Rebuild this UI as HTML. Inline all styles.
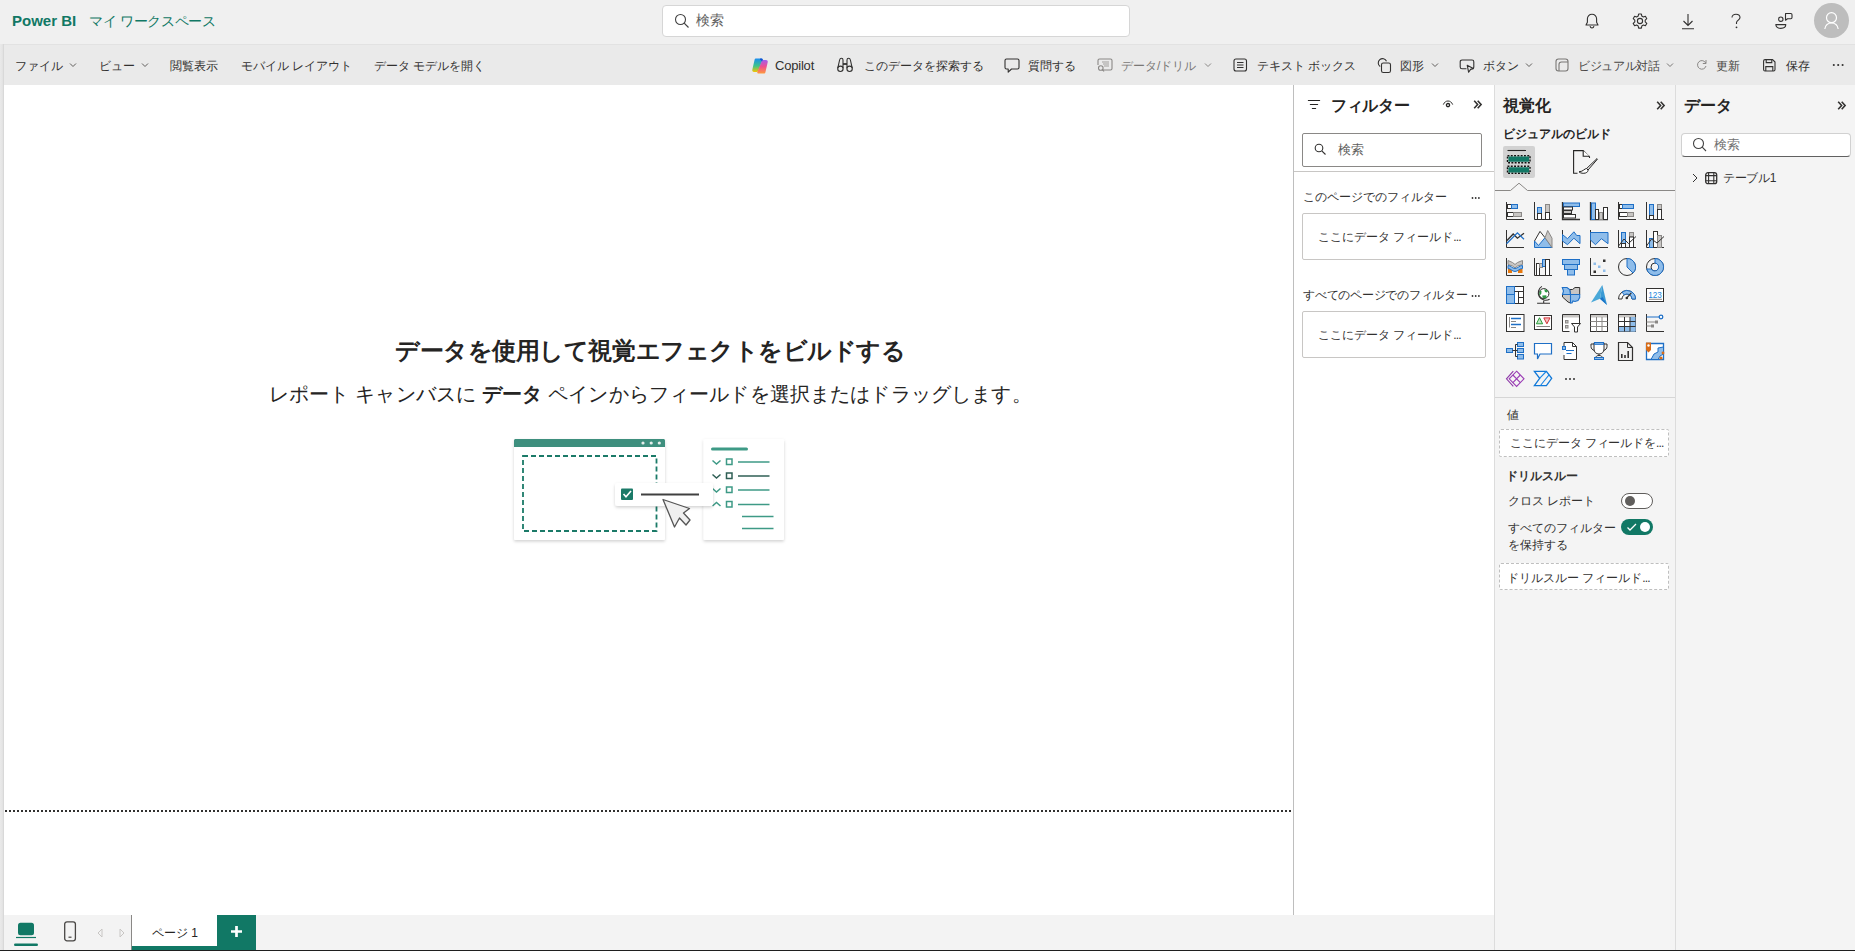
<!DOCTYPE html>
<html><head><meta charset="utf-8">
<style>
*{box-sizing:border-box;margin:0;padding:0}
html,body{width:1855px;height:951px;overflow:hidden;background:#f0f0f0;font-family:"Liberation Sans",sans-serif;color:#252423}
body{position:relative}
.a{position:absolute;white-space:nowrap}
.t12{font-size:12px;line-height:16px}
.t13{font-size:13px;line-height:16px}
.t14{font-size:14px;line-height:18px}
.b{font-weight:bold}
svg{position:absolute;overflow:visible}
.tb{color:#323130}
.dis{color:#605e5c}
</style></head><body>

<!-- ===== top bar ===== -->
<div class="a b" style="left:12px;top:12px;font-size:15px;line-height:18px;color:#117865">Power BI</div>
<div class="a t14" style="left:89px;top:12px;letter-spacing:-0.3px;color:#117865">マイ ワークスペース</div>
<div class="a" style="left:662px;top:5px;width:468px;height:32px;background:#fff;border:1px solid #d6d6d6;border-radius:4px"></div>
<svg style="left:674px;top:13px" width="16" height="16" viewBox="0 0 16 16"><circle cx="6.5" cy="6.5" r="5" fill="none" stroke="#424242" stroke-width="1.1"/><path d="M10.2 10.2L14.5 14.5" stroke="#424242" stroke-width="1.2"/></svg>
<div class="a t14" style="left:696px;top:11px;color:#616161">検索</div>

<!-- bell -->
<svg style="left:1584px;top:13px" width="16" height="16" viewBox="0 0 16 16"><path d="M8 1.2C5.3 1.2 3.4 3.2 3.4 5.8V9.3L2 12H14L12.6 9.3V5.8C12.6 3.2 10.7 1.2 8 1.2Z" fill="none" stroke="#323130" stroke-width="1.1" stroke-linejoin="round"/><path d="M6 13.2C6.3 14.3 7 15 8 15S9.7 14.3 10 13.2" fill="none" stroke="#323130" stroke-width="1.1"/></svg>
<!-- gear -->
<svg style="left:1631px;top:12px" width="18" height="18" viewBox="0 0 18 18"><path d="M7.6 1.2H10.4L10.8 3.3L12.4 4.2L14.4 3.5L15.8 5.9L14.2 7.3V9.1L15.8 10.6L14.4 13L12.4 12.3L10.8 13.2L10.4 15.3H7.6L7.2 13.2L5.6 12.3L3.6 13L2.2 10.6L3.8 9.1V7.3L2.2 5.9L3.6 3.5L5.6 4.2L7.2 3.3Z" transform="translate(0 0.8)" fill="none" stroke="#323130" stroke-width="1.1" stroke-linejoin="round"/><circle cx="9" cy="9" r="2.6" fill="none" stroke="#323130" stroke-width="1.1"/></svg>
<!-- download -->
<svg style="left:1680px;top:13px" width="16" height="17" viewBox="0 0 16 17"><path d="M8 1V12.5M3.5 8L8 12.5L12.5 8M2 15.8H14" fill="none" stroke="#323130" stroke-width="1.1"/></svg>
<!-- help -->
<svg style="left:1729px;top:13px" width="14" height="17" viewBox="0 0 14 17"><path d="M3 4.5C3 2.5 4.7 1.2 7 1.2S11 2.6 11 4.5C11 6.8 8 7.3 7.5 9.5V11" fill="none" stroke="#323130" stroke-width="1.1"/><circle cx="7.5" cy="14.3" r="0.9" fill="#323130"/></svg>
<!-- feedback / people -->
<svg style="left:1774px;top:12px" width="20" height="18" viewBox="0 0 20 18"><circle cx="6.8" cy="7.2" r="2.2" fill="none" stroke="#323130" stroke-width="1.1"/><path d="M1.8 12.6H11.8C11.8 15 9.8 16.4 6.8 16.4S1.8 15 1.8 12.6Z" fill="none" stroke="#323130" stroke-width="1.1" stroke-linejoin="round"/><path d="M11.5 1.5H16.8C17.5 1.5 18 2 18 2.7V5.5C18 6.2 17.5 6.7 16.8 6.7H13.5L11.5 8.2V2.7C11.5 2 11.8 1.5 12.3 1.5Z" fill="none" stroke="#323130" stroke-width="1.1" stroke-linejoin="round"/></svg>
<!-- avatar -->
<div class="a" style="left:1814px;top:3px;width:35px;height:35px;border-radius:50%;background:#bdbdbd"></div>
<svg style="left:1820px;top:9px" width="23" height="23" viewBox="0 0 23 23"><circle cx="11.5" cy="8.7" r="5" fill="none" stroke="#fff" stroke-width="1.2"/><path d="M4.8 20C5.5 16 8 14 11.5 14S17.5 16 18.2 20" fill="none" stroke="#fff" stroke-width="1.2"/></svg>

<!-- ===== left gutter ===== -->
<div class="a" style="left:0;top:44px;width:4px;height:907px;background:linear-gradient(to right,#eaeaea,#e4e4e4 60%,#d4d4d4)"></div>

<!-- ===== toolbar ===== -->
<div class="a" style="left:4px;top:44px;width:1851px;height:41px;background:#eaeaea;border-top:1px solid #e2e2e2"></div>
<div class="a t12 tb" style="left:15px;top:58px">ファイル</div>
<svg style="left:69px;top:62px" width="8" height="6" viewBox="0 0 8 6"><path d="M1 1.5L4 4.5L7 1.5" fill="none" stroke="#605e5c" stroke-width="1"/></svg>
<div class="a t12 tb" style="left:99px;top:58px">ビュー</div>
<svg style="left:141px;top:62px" width="8" height="6" viewBox="0 0 8 6"><path d="M1 1.5L4 4.5L7 1.5" fill="none" stroke="#605e5c" stroke-width="1"/></svg>
<div class="a t12 tb" style="left:170px;top:58px">閲覧表示</div>
<div class="a t12 tb" style="left:241px;top:58px">モバイル レイアウト</div>
<div class="a t12 tb" style="left:374px;top:58px">データ モデルを開く</div>

<!-- copilot -->
<svg style="left:751px;top:57px" width="18" height="18" viewBox="0 0 18 18">
<defs><linearGradient id="cp1" x1="0" y1="0" x2="0" y2="1"><stop offset="0" stop-color="#1a8df0"/><stop offset=".55" stop-color="#3cc48a"/><stop offset="1" stop-color="#f5c400"/></linearGradient>
<linearGradient id="cp2" x1="0" y1="0" x2="0" y2="1"><stop offset="0" stop-color="#a35cf0"/><stop offset=".5" stop-color="#f0508c"/><stop offset="1" stop-color="#ff9a3c"/></linearGradient></defs>
<path d="M4.5 1.5H10.5C11.5 1.5 12 2.3 11.6 3.2L9 9.5L7.4 13.8C7.1 14.5 6.6 15 5.8 15H3C1.7 15 1 14 1.3 12.8L3.3 4C3.6 2.3 4 1.5 4.5 1.5Z" fill="url(#cp1)"/>
<path d="M13.5 16.5H7.5C6.5 16.5 6 15.7 6.4 14.8L9 8.5L10.6 4.2C10.9 3.5 11.4 3 12.2 3H15C16.3 3 17 4 16.7 5.2L14.7 14C14.4 15.7 14 16.5 13.5 16.5Z" fill="url(#cp2)"/>
<path d="M9.2 1.5H10.5C11.5 1.5 12 2.3 11.6 3.2L11 4.6C10.5 3.6 10 3 9 3Z" fill="#1450d0"/>
</svg>
<div class="a t13 tb" style="left:775px;top:58px;letter-spacing:-0.2px">Copilot</div>
<!-- binoculars -->
<svg style="left:836px;top:57px" width="18" height="16" viewBox="0 0 18 16"><path d="M1.8 11.2L3.6 3C3.9 1.7 4.6 1.2 5.4 1.2S7 1.9 7 3V11.2M16.2 11.2L14.4 3C14.1 1.7 13.4 1.2 12.6 1.2S11 1.9 11 3V11.2M7 7H11" fill="none" stroke="#323130" stroke-width="1.1"/><circle cx="4.4" cy="11.8" r="2.7" fill="none" stroke="#323130" stroke-width="1.1"/><circle cx="13.6" cy="11.8" r="2.7" fill="none" stroke="#323130" stroke-width="1.1"/><path d="M7 6.2H11V7.8H7Z" fill="#323130"/></svg>
<div class="a t12 tb" style="left:864px;top:58px">このデータを探索する</div>
<!-- comment -->
<svg style="left:1004px;top:58px" width="16" height="16" viewBox="0 0 16 16"><path d="M2.5 1H13.5C14.3 1 15 1.7 15 2.5V9.5C15 10.3 14.3 11 13.5 11H7.5L4.2 14.2V11H2.5C1.7 11 1 10.3 1 9.5V2.5C1 1.7 1.7 1 2.5 1Z" fill="none" stroke="#323130" stroke-width="1.1" stroke-linejoin="round"/></svg>
<div class="a t12 tb" style="left:1028px;top:58px">質問する</div>
<!-- data/drill (disabled) -->
<svg style="left:1097px;top:58px" width="16" height="16" viewBox="0 0 16 16"><path d="M5 12H13.5C14.3 12 15 11.3 15 10.5V2.5C15 1.7 14.3 1 13.5 1H2.5C1.7 1 1 1.7 1 2.5V7" fill="none" stroke="#8a8886" stroke-width="1.1"/><path d="M5 4H12M6 6H12M7 8H12" stroke="#a19f9d" stroke-width="1"/><circle cx="3.8" cy="10" r="2.3" fill="none" stroke="#8a8886" stroke-width="1.1"/><path d="M5.5 11.7L7 13.5" stroke="#8a8886" stroke-width="1.1"/></svg>
<div class="a t12" style="left:1121px;top:58px;color:#7a7876">データ/ドリル</div>
<svg style="left:1204px;top:62px" width="8" height="6" viewBox="0 0 8 6"><path d="M1 1.5L4 4.5L7 1.5" fill="none" stroke="#8a8886" stroke-width="1"/></svg>
<!-- text box -->
<svg style="left:1233px;top:58px" width="15" height="15" viewBox="0 0 15 15"><rect x="1" y="1" width="12.5" height="12" rx="2" fill="none" stroke="#323130" stroke-width="1.1"/><path d="M4 4.5H10.5M4 7H10.5M4 9.5H10.5" stroke="#323130" stroke-width="1.1"/></svg>
<div class="a t12 tb" style="left:1257px;top:58px">テキスト ボックス</div>
<!-- shapes -->
<svg style="left:1376px;top:57px" width="17" height="17" viewBox="0 0 17 17"><path d="M10.5 4.2A4.3 4.3 0 1 0 4.2 9.5" fill="none" stroke="#323130" stroke-width="1.1"/><rect x="5.5" y="6" width="9" height="9.5" rx="1.8" fill="none" stroke="#323130" stroke-width="1.1"/></svg>
<div class="a t12 tb" style="left:1400px;top:58px">図形</div>
<svg style="left:1431px;top:62px" width="8" height="6" viewBox="0 0 8 6"><path d="M1 1.5L4 4.5L7 1.5" fill="none" stroke="#605e5c" stroke-width="1"/></svg>
<!-- button -->
<svg style="left:1459px;top:58px" width="17" height="16" viewBox="0 0 17 16"><path d="M7.5 10.8H3C1.9 10.8 1.2 10.1 1.2 9V3.8C1.2 2.7 1.9 2 3 2H13C14.1 2 14.8 2.7 14.8 3.8V9C14.8 9.7 14.5 10.2 14 10.5" fill="none" stroke="#323130" stroke-width="1.1"/><path d="M8.2 7.2L14.3 10.6L11.6 11.4L9.6 14.2Z" fill="none" stroke="#323130" stroke-width="1.1" stroke-linejoin="round"/></svg>
<div class="a t12 tb" style="left:1483px;top:58px">ボタン</div>
<svg style="left:1525px;top:62px" width="8" height="6" viewBox="0 0 8 6"><path d="M1 1.5L4 4.5L7 1.5" fill="none" stroke="#605e5c" stroke-width="1"/></svg>
<!-- visual conversation -->
<svg style="left:1555px;top:58px" width="15" height="15" viewBox="0 0 15 15"><rect x="1" y="1" width="12" height="12" rx="2.5" fill="none" stroke="#797775" stroke-width="1.1"/><path d="M4 13V6.5C4 5 5 4 6.5 4H13" fill="none" stroke="#797775" stroke-width="1.1"/></svg>
<div class="a t12" style="left:1578px;top:58px;letter-spacing:-0.35px;color:#484644">ビジュアル対話</div>
<svg style="left:1666px;top:62px" width="8" height="6" viewBox="0 0 8 6"><path d="M1 1.5L4 4.5L7 1.5" fill="none" stroke="#797775" stroke-width="1"/></svg>
<!-- refresh -->
<svg style="left:1696px;top:59px" width="12" height="12" viewBox="0 0 12 12"><path d="M9.8 4.2A4.3 4.3 0 1 0 10 7" fill="none" stroke="#8a8886" stroke-width="1"/><path d="M10 1V4.5H6.8" fill="none" stroke="#8a8886" stroke-width="1"/></svg>
<div class="a t12" style="left:1716px;top:58px;color:#484644">更新</div>
<!-- save -->
<svg style="left:1762px;top:58px" width="15" height="15" viewBox="0 0 15 15"><path d="M1.6 3C1.6 2.2 2.2 1.6 3 1.6H10.6L13 4V11.6C13 12.4 12.4 13 11.6 13H3C2.2 13 1.6 12.4 1.6 11.6Z" fill="none" stroke="#323130" stroke-width="1.1" stroke-linejoin="round"/><path d="M4.2 1.6V4.6H9.8V1.6M3.8 13V8.6H10.8V13" fill="none" stroke="#323130" stroke-width="1.1"/></svg>
<div class="a t12 tb" style="left:1786px;top:58px">保存</div>
<svg style="left:1831px;top:62px" width="14" height="6" viewBox="0 0 14 6"><circle cx="2.8" cy="3" r="1.05" fill="#323130"/><circle cx="7.2" cy="3" r="1.05" fill="#323130"/><circle cx="11.6" cy="3" r="1.05" fill="#323130"/></svg>

<!-- ===== canvas ===== -->
<div class="a" style="left:4px;top:85px;width:1289px;height:830px;background:#fff"></div>
<div class="a" style="left:5px;top:810px;width:1287px;height:2px;background-image:linear-gradient(to right,#323130 0 2px,transparent 2px 4px);background-size:4px 2px"></div>
<div class="a b" style="left:395px;top:336px;font-size:24px;letter-spacing:-0.45px;line-height:30px;color:#252423">データを使用して視覚エフェクトをビルドする</div>
<div class="a" style="left:269px;top:381px;font-size:20px;letter-spacing:0.15px;line-height:26px;color:#252423">レポート キャンバスに <b>データ</b> ペインからフィールドを選択またはドラッグします。</div>

<!-- illustration -->
<svg style="left:500px;top:430px" width="300" height="120" viewBox="0 0 300 120">
<defs><filter id="sh" x="-20%" y="-20%" width="140%" height="150%"><feDropShadow dx="0" dy="1.5" stdDeviation="1.6" flood-color="#000" flood-opacity="0.18"/></filter></defs>
<g filter="url(#sh)"><rect x="14" y="9" width="151" height="101" rx="1.5" fill="#fff"/></g>
<path d="M14 17V10.5C14 9.7 14.7 9 15.5 9H163.5C164.3 9 165 9.7 165 10.5V17Z" fill="#3e8f7e"/>
<circle cx="143" cy="13" r="1.6" fill="#e6eeec"/><circle cx="151.2" cy="13" r="1.6" fill="#e6eeec"/><circle cx="159.3" cy="13" r="1.6" fill="#e6eeec"/>
<rect x="23" y="26" width="133.5" height="75" fill="none" stroke="#1b7a68" stroke-width="1.8" stroke-dasharray="5 3"/>
<g filter="url(#sh)"><rect x="203.5" y="9" width="80.5" height="101" rx="1.5" fill="#fff"/></g>
<path d="M212.5 19H246.5" stroke="#3e9a86" stroke-width="3" stroke-linecap="round"/>
<g fill="none" stroke="#3e9a86" stroke-width="1.5">
<path d="M212.5 30.5L216.5 34L220.5 30.5"/><rect x="226.5" y="29" width="5.5" height="5.5"/><path d="M238 32H269.5"/>
<path d="M212.5 58.5L216.5 62L220.5 58.5"/><rect x="226.5" y="57" width="5.5" height="5.5"/><path d="M238 60H269.5"/>
<path d="M212.5 76L216.5 72.5L220.5 76"/><rect x="226.5" y="71.5" width="5.5" height="5.5"/><path d="M238 74.5H269.5"/>
<path d="M242 86.5H273.5M242 98.5H273.5"/>
</g>
<g fill="none" stroke="#2f5f55" stroke-width="1.5"><path d="M212.5 44.5L216.5 48L220.5 44.5"/><rect x="226.5" y="43" width="5.5" height="5.5"/><path d="M238 46H269.5"/></g>
<g filter="url(#sh)"><rect x="115" y="53" width="98" height="23" rx="3" fill="#fff"/></g>
<rect x="121" y="58.5" width="12" height="11.5" rx="1" fill="#1b7a68"/>
<path d="M123.5 64L126 66.8L131 61" fill="none" stroke="#fff" stroke-width="1.6"/>
<path d="M141 64.5H199" stroke="#404040" stroke-width="1.8"/>
<path d="M163 69.5L189.5 78.5L183.5 83L190 90L186 95L179.5 88L174.5 97Z" fill="#f0f0f0" stroke="#555" stroke-width="1.3" stroke-linejoin="round"/>
</svg>

<!-- ===== filter pane ===== -->
<div class="a" style="left:1293px;top:85px;width:201px;height:830px;background:#fff;border-left:1px solid #bebebe"></div>
<svg style="left:1307px;top:99px" width="14" height="11" viewBox="0 0 14 11"><path d="M1.4 1.5H12.6M3.4 5.5H10.6M5.4 9.5H8.6" stroke="#252423" stroke-width="1.2" stroke-linecap="round"/></svg>
<div class="a b" style="left:1331px;top:96px;font-size:16px;letter-spacing:-0.35px;line-height:20px;color:#252423">フィルター</div>
<svg style="left:1442px;top:100px" width="12" height="8" viewBox="0 0 12 8"><path d="M1.3 4.6C2.5 2 4 1 6 1S9.5 2 10.7 4.6" fill="none" stroke="#323130" stroke-width="1"/><circle cx="6" cy="5.1" r="1.6" fill="none" stroke="#252423" stroke-width="1.3"/></svg>
<svg style="left:1473px;top:100px" width="10" height="9" viewBox="0 0 10 9"><path d="M1.2 0.8L4.6 4.5L1.2 8.2M4.7 0.8L8.1 4.5L4.7 8.2" fill="none" stroke="#323130" stroke-width="1.6"/></svg>
<div class="a" style="left:1302px;top:133px;width:180px;height:34px;border:1px solid #8a8886;border-radius:2px;background:#fff"></div>
<svg style="left:1314px;top:143px" width="13" height="13" viewBox="0 0 13 13"><circle cx="5" cy="5" r="3.8" fill="none" stroke="#323130" stroke-width="1.1"/><path d="M7.8 7.8L11.5 11.5" stroke="#323130" stroke-width="1.1"/></svg>
<div class="a t13" style="left:1338px;top:142px;color:#605e5c">検索</div>
<div class="a" style="left:1294px;top:171px;width:200px;height:1px;background:#c8c6c4"></div>
<div class="a t12" style="left:1303px;top:189px;color:#323130">このページでのフィルター</div>
<svg style="left:1471px;top:196px" width="10" height="4" viewBox="0 0 10 4"><circle cx="1.5" cy="2" r="0.9" fill="#323130"/><circle cx="4.7" cy="2" r="0.9" fill="#323130"/><circle cx="7.9" cy="2" r="0.9" fill="#323130"/></svg>
<div class="a" style="left:1302px;top:213px;width:184px;height:47px;border:1px solid #c8c6c4;border-radius:2px;background:#fff"></div>
<div class="a t12" style="left:1318px;top:229px;color:#323130">ここにデータ フィールド<span style="letter-spacing:-0.9px">...</span></div>
<div class="a t12" style="left:1303px;top:287px;letter-spacing:-0.25px;color:#323130">すべてのページでのフィルター</div>
<svg style="left:1471px;top:294px" width="10" height="4" viewBox="0 0 10 4"><circle cx="1.5" cy="2" r="0.9" fill="#323130"/><circle cx="4.7" cy="2" r="0.9" fill="#323130"/><circle cx="7.9" cy="2" r="0.9" fill="#323130"/></svg>
<div class="a" style="left:1302px;top:311px;width:184px;height:47px;border:1px solid #c8c6c4;border-radius:2px;background:#fff"></div>
<div class="a t12" style="left:1318px;top:327px;color:#323130">ここにデータ フィールド<span style="letter-spacing:-0.9px">...</span></div>

<!-- ===== viz pane ===== -->
<div class="a" style="left:1494px;top:85px;width:181px;height:866px;background:#f4f4f4;border-left:1px solid #dcdcdc"></div>
<div class="a b" style="left:1503px;top:96px;font-size:16px;line-height:20px;color:#252423">視覚化</div>
<svg style="left:1656px;top:101px" width="10" height="9" viewBox="0 0 10 9"><path d="M1.2 0.8L4.6 4.5L1.2 8.2M4.7 0.8L8.1 4.5L4.7 8.2" fill="none" stroke="#323130" stroke-width="1.6"/></svg>
<div class="a t12 b" style="left:1503px;top:126px;color:#252423">ビジュアルのビルド</div>
<div class="a" style="left:1503px;top:146px;width:32px;height:32px;background:#d2d2d2;border-radius:2px"></div>
<svg style="left:1506px;top:149px" width="26" height="26" viewBox="0 0 26 26"><path d="M1.5 1.5H20" stroke="#252423" stroke-width="1.1"/><rect x="1.5" y="6.7" width="22.5" height="7" fill="none" stroke="#111" stroke-width="1.4" stroke-dasharray="1.9 1.4"/><rect x="2.4" y="7.6" width="20.7" height="5.2" rx="1" fill="#117865"/><rect x="1.5" y="17.3" width="22.5" height="7" fill="none" stroke="#111" stroke-width="1.4" stroke-dasharray="1.9 1.4"/><rect x="2.4" y="18.2" width="20.7" height="5.2" rx="1" fill="#117865"/></svg>
<svg style="left:1572px;top:149px" width="26" height="26" viewBox="0 0 26 26"><path d="M5.5 24.2H1.6V1.6H11.2L17.5 7.9V9" fill="none" stroke="#252423" stroke-width="1.1"/><path d="M11.2 1.6V7.3H17.5" fill="#fff" stroke="#252423" stroke-width="1.1"/><path d="M25 9.6L14.6 19.5L16 21L25.4 10.2Z" fill="none" stroke="#252423" stroke-width="1"/><path d="M14.6 19.5C12.5 19.5 11.5 22.5 7 22.8C8.5 24.4 11.5 24.6 13.5 24C15.5 23.3 16.3 22 16 21Z" fill="#fff" stroke="#252423" stroke-width="1"/></svg>
<svg style="left:1494px;top:182px" width="181" height="10" viewBox="0 0 181 10"><path d="M1 8.5H16.5L25 1.2L33.5 8.5H181" fill="none" stroke="#8a8886" stroke-width="1"/></svg>
<svg class="vizgrid" style="left:1506px;top:202px;width:170px;height:190px" width="170" height="190"><g transform="translate(0,0)"><path d="M0.5 0V17.5H18" fill="none" stroke="#323130" /><rect x="1.5" y="2.5" width="4" height="4" fill="#fff" stroke="#323130"/><rect x="5.5" y="2.5" width="6" height="4" fill="#8fbdea" stroke="#1e6fc6"/><rect x="1.5" y="10.5" width="6" height="4" fill="#fff" stroke="#323130"/><rect x="7.5" y="10.5" width="8" height="4" fill="#c8c6c4" stroke="#8a8886"/></g><g transform="translate(28,0)"><path d="M0.5 0V17.5H18" fill="none" stroke="#323130" /><rect x="3.5" y="5.5" width="4" height="6" fill="#8fbdea" stroke="#1e6fc6"/><rect x="3.5" y="11.5" width="4" height="6" fill="#fff" stroke="#323130"/><rect x="11.5" y="2.5" width="4" height="8" fill="#c8c6c4" stroke="#8a8886"/><rect x="11.5" y="10.5" width="4" height="7" fill="#fff" stroke="#323130"/></g><g transform="translate(56,0)"><path d="M0.5 0V17.5H18" fill="none" stroke="#323130" stroke-width="1.3"/><rect x="1.5" y="1" width="16" height="3.5" fill="#8fbdea" stroke="#1e6fc6"/><rect x="1.5" y="5" width="9" height="3" fill="#fff" stroke="#323130"/><rect x="1.5" y="8.5" width="8" height="3" fill="#c8c6c4" stroke="#323130"/><rect x="1.5" y="12.5" width="12" height="3.5" fill="#fff" stroke="#323130"/></g><g transform="translate(84,0)"><path d="M0.5 0V17.5H18" fill="none" stroke="#323130" stroke-width="1.3"/><rect x="1.5" y="1" width="4" height="16.5" fill="#8fbdea" stroke="#1e6fc6"/><rect x="5.5" y="7.5" width="3" height="10" fill="#fff" stroke="#323130"/><rect x="9.5" y="10.5" width="3" height="7" fill="#c8c6c4" stroke="#8a8886"/><rect x="13.5" y="5.5" width="4" height="12" fill="#fff" stroke="#323130"/></g><g transform="translate(112,0)"><path d="M0.5 0V17.5H18" fill="none" stroke="#323130" /><rect x="1.5" y="2.5" width="3" height="4" fill="#fff" stroke="#323130"/><rect x="4.5" y="2.5" width="11" height="4" fill="#8fbdea" stroke="#1e6fc6"/><rect x="1.5" y="10.5" width="8" height="4" fill="#fff" stroke="#323130"/><rect x="9.5" y="10.5" width="6" height="4" fill="#c8c6c4" stroke="#8a8886"/></g><g transform="translate(140,0)"><path d="M0.5 0V17.5H18" fill="none" stroke="#323130" /><rect x="3.5" y="2.5" width="4" height="11" fill="#8fbdea" stroke="#1e6fc6"/><rect x="3.5" y="13.5" width="4" height="4" fill="#fff" stroke="#323130"/><rect x="11.5" y="2.5" width="4" height="5" fill="#c8c6c4" stroke="#8a8886"/><rect x="11.5" y="7.5" width="4" height="10" fill="#fff" stroke="#323130"/></g><g transform="translate(0,28)"><path d="M0.5 0V17.5H18" fill="none" stroke="#323130" /><path d="M0.5 11L7.2 4L11.4 8.2L18 3.2" fill="none" stroke="#323130" stroke-width="1.3"/><path d="M0.5 13.7L11.4 2.8L18 9.2" fill="none" stroke="#1e6fc6" stroke-width="1.3"/></g><g transform="translate(28,28)"><path d="M0.5 11L4.5 15.5L11 7.7L18 17.5H0.5Z" fill="#8fbdea" stroke="#1e6fc6" /><path d="M0.5 11L6 1.4L11 7.7" fill="#fff" stroke="#323130" /><path d="M11 7.7L13.7 0.5L18 8.2V17.5Z" fill="#c8c6c4" stroke="#8a8886" /></g><g transform="translate(56,28)"><path d="M0.5 0V17.5H18" fill="none" stroke="#323130" /><path d="M0.5 4.6L5.5 8.7L11.9 1.8L14.7 5.5H18V13.7L11.9 8.2L5.5 14.7L0.5 11Z" fill="#8fbdea" stroke="#1e6fc6" /></g><g transform="translate(84,28)"><path d="M0.5 0V17.5H18" fill="none" stroke="#323130" /><path d="M0.5 2.5H18V13.7L11.4 8.7L5.5 14.7L0.5 10Z" fill="#8fbdea" stroke="#1e6fc6" /></g><g transform="translate(112,28)"><path d="M0.5 0V17.5H18" fill="none" stroke="#323130" /><rect x="3.5" y="2.5" width="4" height="11" fill="#8fbdea" stroke="#1e6fc6"/><rect x="3.5" y="13.5" width="4" height="4" fill="#fff" stroke="#323130"/><rect x="11.5" y="2.5" width="4" height="4.5" fill="#c8c6c4" stroke="#8a8886"/><rect x="11.5" y="7" width="4" height="10.5" fill="#fff" stroke="#323130"/><path d="M0.5 16L6 9L10.5 13.5L18 6.5" fill="none" stroke="#323130" /></g><g transform="translate(140,28)"><path d="M0.5 0V17.5H18" fill="none" stroke="#323130" /><rect x="3.5" y="8.5" width="4" height="9" fill="#8fbdea" stroke="#1e6fc6"/><rect x="7.5" y="1.5" width="4" height="16" fill="#fff" stroke="#323130"/><rect x="11.5" y="5.5" width="4" height="12" fill="#c8c6c4" stroke="#8a8886"/><path d="M0.5 16L5.5 9L11 13L18 6.5" fill="none" stroke="#323130" /></g><g transform="translate(0,56)"><path d="M0.5 0V17.5H18" fill="none" stroke="#323130" /><path d="M2 2.5L6.5 4.5L9 6.5L11.5 4.5L16.5 2.5V6.5L11.5 8L9 10L6.5 8L2 6.5Z" fill="#c8c6c4" stroke="#8a8886" /><rect x="2" y="11" width="4" height="4" fill="#e8780c"/><rect x="12" y="11" width="4.5" height="4" fill="#e8780c"/><path d="M2 7.5C5 7.5 6 10.5 9 10.5C12 10.5 13 7.5 16.5 7.5V10.5C13 10.5 12 13.5 9 13.5C6 13.5 5 10.5 2 10.5Z" fill="#8fbdea" stroke="#1e6fc6" /></g><g transform="translate(28,56)"><path d="M0.5 0V17.5H18" fill="none" stroke="#323130" /><rect x="2.5" y="5.5" width="3" height="12" fill="#fff" stroke="#323130"/><rect x="5.5" y="5.5" width="3" height="4" fill="#c8c6c4" stroke="#8a8886"/><rect x="8.5" y="1.5" width="3" height="7" fill="#8fbdea" stroke="#1e6fc6"/><rect x="11.5" y="1.5" width="4" height="16" fill="#fff" stroke="#323130"/></g><g transform="translate(56,56)"><rect x="0.5" y="1.5" width="17" height="5" fill="#8fbdea" stroke="#1e6fc6"/><rect x="2.5" y="6.5" width="13" height="5" fill="#8fbdea" stroke="#1e6fc6"/><rect x="5.5" y="11.5" width="7" height="5.5" fill="#8fbdea" stroke="#1e6fc6"/></g><g transform="translate(84,56)"><path d="M0.5 0V17.5H18" fill="none" stroke="#323130" /><rect x="3.5" y="4.5" width="2.5" height="2.5" fill="#8fbdea"/><rect x="8" y="7.5" width="2.5" height="2.5" fill="#8fbdea"/><rect x="13" y="11.5" width="2.5" height="2.5" fill="#8fbdea"/><rect x="13" y="1.5" width="2.5" height="2.5" fill="#323130"/><rect x="3.5" y="12.5" width="2.5" height="2.5" fill="#323130"/></g><g transform="translate(112,56)"><circle cx="9" cy="9" r="8.5" fill="#f4f4f4" stroke="#323130"/><path d="M9 9V0.5A8.5 8.5 0 0 1 15 15Z" fill="#8fbdea" stroke="#1e6fc6" /></g><g transform="translate(140,56)"><circle cx="9" cy="9" r="8.5" fill="#f4f4f4" stroke="#323130"/><circle cx="9" cy="9" r="4" fill="#f4f4f4" stroke="#323130"/><path d="M9 0.5A8.5 8.5 0 1 1 0.8 11H5.2A4 4 0 1 0 9 5Z" fill="#8fbdea" stroke="#1e6fc6" /></g><g transform="translate(0,84)"><rect x="0.5" y="0.5" width="17" height="17" fill="#fff" stroke="#323130"/><rect x="0.5" y="0.5" width="8" height="8" fill="#8fbdea" stroke="#1e6fc6"/><rect x="0.5" y="8.5" width="8" height="9" fill="#8fbdea" stroke="#1e6fc6"/><path d="M8.5 5.5H17.5M12.5 11.5H17.5M12.5 5.5V17.5" fill="none" stroke="#323130" /></g><g transform="translate(28,84)"><circle cx="9.9" cy="7.6" r="5" fill="#fff" stroke="#323130"/><path d="M10.5 3.2C11.8 3 13.5 4 14 5.5L12.5 6.5L11 6L10.5 4.5Z" fill="#2f9a45" stroke="none" /><path d="M5.5 6C6 5 7 4.6 7.5 5L7.3 7.5L6 9.5L5.3 8.5Z" fill="#2f9a45" stroke="none" /><path d="M8.3 9.5L12.3 9.2L12.7 11.8L10.2 12.6L8.5 11.5Z" fill="#2f9a45" stroke="none" /><path d="M7.9 0.4A7.4 7.4 0 0 0 15.6 13.2" fill="none" stroke="#323130" stroke-width="1.1"/><path d="M9.7 14.8V17.3M3.1 17.3H16" fill="none" stroke="#323130" stroke-width="1.1"/></g><g transform="translate(56,84)"><path d="M7.7 3.5H10.5L13 1.5H17.7V8.5H8.5Z" fill="#c8c6c4" stroke="#323130" /><path d="M0.5 8.5H8.5V17L6 16L0.5 11Z" fill="#c8c6c4" stroke="#323130" /><path d="M0.3 1.5H5L7.7 3.5L8.5 8.5H0.5L1.5 5Z" fill="#8fbdea" stroke="#1e6fc6" stroke-width="1.1"/><path d="M8.5 8.5H17.7V11.5L16 14.5L13 15.5L11 15L10 17L8.5 17Z" fill="#8fbdea" stroke="#1e6fc6" stroke-width="1.1"/></g><g transform="translate(84,84)"><defs><linearGradient id="az" x1="0" y1="0" x2="1" y2="1"><stop offset="0" stop-color="#50b4e6"/><stop offset="1" stop-color="#1c70c8"/></linearGradient></defs><path d="M12.3 -1L1 16.6L10 12.8Z" fill="#4aa8d8" stroke="none" /><path d="M12.3 -1L10 12.8L17 18.9Z" fill="#3a9ad4" stroke="none" /><path d="M10 12.8L17 18.9L12.6 11Z" fill="#1a73c8" stroke="none" /></g><g transform="translate(112,84)"><path d="M0.5 13A8.5 8.5 0 0 1 17.5 13H14A5 5 0 0 0 4 13Z" fill="#fff" stroke="#323130" /><path d="M4.1 6A8.5 8.5 0 0 1 17.5 13H14A5 5 0 0 0 6.1 8.9Z" fill="#8fbdea" stroke="#1e6fc6" /><path d="M8.6 12.2L13.3 6.9" fill="none" stroke="#323130" stroke-width="1.2"/><circle cx="8.8" cy="12" r="1.3" fill="#323130"/></g><g transform="translate(140,84)"><rect x="0.5" y="2.5" width="17" height="13" fill="#fff" stroke="#323130"/><text x="2.3" y="11.8" font-size="9.5" textLength="13.6" lengthAdjust="spacingAndGlyphs" fill="#1a86dc" font-family="Liberation Sans">123</text><path d="M3 13.3H16" fill="none" stroke="#8a8886" /></g><g transform="translate(0,112)"><rect x="0.5" y="0.5" width="17.5" height="17" fill="#fff" stroke="#323130"/><path d="M3.5 3V13.5" fill="none" stroke="#8a8886" /><path d="M5 4.5H15M5 10.5H15" fill="none" stroke="#1e6fc6" stroke-width="1.6"/><path d="M5 7.5H10M5 13.5H10" fill="none" stroke="#8a8886" /></g><g transform="translate(28,112)"><rect x="0.5" y="1.5" width="17" height="14" fill="#fff" stroke="#323130"/><path d="M2.4 9.8H8.6L5.5 3.7Z" fill="#bfe5c4" stroke="#2a9a3a" /><path d="M9.8 3.9H16L12.9 9.8Z" fill="#f5c0c0" stroke="#d13438" /><path d="M2.5 12.5H16" fill="none" stroke="#8a8886" /></g><g transform="translate(56,112)"><path d="M17.5 9V0.5H0.5V17.5H7.5" fill="#fff" stroke="#323130" /><rect x="1" y="1" width="16" height="2.5" fill="#c8c6c4"/><rect x="3.5" y="6.5" width="2.5" height="2.5" fill="#c8c6c4" stroke="#8a8886"/><rect x="3.5" y="11.5" width="2.5" height="2.5" fill="#c8c6c4" stroke="#8a8886"/><path d="M9.5 9.5H18.5L15.5 13V18H12.5V13Z" fill="#fff" stroke="#323130" /></g><g transform="translate(84,112)"><rect x="0.5" y="0.5" width="17" height="17" fill="#fff" stroke="#323130"/><rect x="1" y="1" width="16" height="2.5" fill="#c8c6c4"/><path d="M6.5 3V17.5M12 3V17.5M0.5 7.5H17.5M0.5 12.5H17.5" fill="none" stroke="#8a8886" /></g><g transform="translate(112,112)"><rect x="0.5" y="0.5" width="17" height="17" fill="#fff" stroke="#323130"/><rect x="1" y="1" width="16" height="2.5" fill="#c8c6c4"/><rect x="12" y="3" width="5.5" height="14.5" fill="#8fbdea"/><rect x="1" y="12.5" width="16.5" height="5" fill="#8fbdea"/><path d="M6.5 3V17.5M12 3V17.5M0.5 7.5H17.5M0.5 12.5H17.5" fill="none" stroke="#323130" /></g><g transform="translate(140,112)"><path d="M0.5 0V17.5H18" fill="none" stroke="#323130" /><path d="M0.5 3H13.5" fill="none" stroke="#1e6fc6" /><circle cx="15" cy="3" r="1.8" fill="#fff" stroke="#1e6fc6" stroke-width="1.3"/><path d="M0.5 8H9.5M0.5 12H5.5" fill="none" stroke="#8a8886" /><rect x="9.5" y="7" width="2" height="2" fill="#fff" stroke="#8a8886"/><rect x="5.5" y="11" width="2" height="2" fill="#fff" stroke="#8a8886"/></g><g transform="translate(0,140)"><rect x="0.5" y="6.5" width="6" height="4" fill="#8fbdea" stroke="#1e6fc6"/><rect x="11.5" y="0.5" width="6" height="4" fill="#8fbdea" stroke="#1e6fc6"/><rect x="11.5" y="6.5" width="6" height="4" fill="#8fbdea" stroke="#1e6fc6"/><rect x="11.5" y="12.5" width="6" height="4.5" fill="#8fbdea" stroke="#1e6fc6"/><path d="M6.5 8.5H9.5M9.5 2.5V14.5M9.5 2.5H11.5M9.5 8.5H11.5M9.5 14.5H11.5" fill="none" stroke="#323130" /></g><g transform="translate(28,140)"><path d="M0.5 1.5H17.5V12H6L3.5 17V12H0.5Z" fill="#fff" stroke="#1e6fc6" stroke-width="1.2"/></g><g transform="translate(56,140)"><path d="M2 0.5H10.5L14.5 4.5V17.5H2V13M2 7V0.5" fill="#fff" stroke="#323130" /><path d="M10.5 0.5V4.5H14.5" fill="none" stroke="#323130" /><rect x="0.5" y="4.5" width="3" height="3" fill="#8fbdea" stroke="#1e6fc6"/><path d="M4 8.5H12M4.5 11.5H9.5" fill="none" stroke="#1e6fc6" /></g><g transform="translate(84,140)"><path d="M4 0.8H14V7C14 10 12 12 9 12C6 12 4 10 4 7Z" fill="#fff" stroke="#323130" /><path d="M4 2H1V4.5C1 6.5 2.5 8 4.2 8.5M14 2H17V4.5C17 6.5 15.5 8 13.8 8.5" fill="none" stroke="#323130" /><path d="M9 12V14M6 15.5C6 14 7 13.5 9 13.5C11 13.5 12 14 12 15.5" fill="none" stroke="#323130" /><rect x="4.5" y="15.5" width="9" height="2" fill="#8fbdea" stroke="#1e6fc6"/><rect x="4.5" y="0.5" width="9" height="1.8" fill="#8fbdea" stroke="#1e6fc6"/></g><g transform="translate(112,140)"><path d="M0.5 0.5H9.5L14.5 5.5V18.5H0.5Z" fill="#f0f0f0" stroke="#323130" stroke-width="1.2"/><path d="M9.5 0.5V5.5H14.5" fill="none" stroke="#323130" /><rect x="3" y="12" width="1.6" height="4" fill="#323130"/><rect x="6.2" y="13" width="1.6" height="3" fill="#323130"/><rect x="9.4" y="9" width="1.6" height="7" fill="#323130"/></g><g transform="translate(140,140)"><path d="M0.5 1.5H17.5V17.5H0.5Z" fill="#fff" stroke="#1e6fc6" stroke-width="1.3"/><path d="M5 17.5L8 12L12 10L12 6L17.5 5V12L14 14L12 17.5Z" fill="#8fbdea" stroke="#1e6fc6" /><path d="M0 0.5H5V8L2.5 10.5L0 8Z" fill="#d86c18"/><circle cx="2.5" cy="3.5" r="1.2" fill="#fff"/><circle cx="17" cy="11" r="1.4" fill="#d86c18"/><circle cx="15" cy="16" r="1.6" fill="#d86c18"/></g><g transform="translate(0,168)"><path d="M7.3 1.2L0.5 8.8L7.3 16.4" fill="none" stroke="#8e3aa8" stroke-width="1.1"/><path d="M10.6 1.2L18 8.8L10.6 16.4L3.2 8.8Z" fill="none" stroke="#9b3db5" stroke-width="1.1"/><path d="M6.9 5L14.3 12.6M6.9 12.6L14.3 5" fill="none" stroke="#9b3db5" stroke-width="1.1"/></g><g transform="translate(28,168)"><path d="M0.4 1.3H12.4L17.7 8.3L12.4 15.6H0.4L5.7 8.3Z" fill="none" stroke="#1078d8" stroke-width="1.3"/><path d="M12.2 1.5L5.8 8.2M15.2 4.6L6.5 15.5" fill="none" stroke="#1a86e6" stroke-width="1.1"/></g><g transform="translate(56,168)"><circle cx="4" cy="9" r="1" fill="#323130"/><circle cx="8" cy="9" r="1" fill="#323130"/><circle cx="12" cy="9" r="1" fill="#323130"/></g></svg>
<div class="a" style="left:1495px;top:397px;width:180px;height:1px;background:#d6d6d6"></div>
<div class="a t12" style="left:1507px;top:407px;color:#323130">値</div>
<div class="a" style="left:1499px;top:429px;width:170px;height:28px;border:1px dashed #bfbfbf;border-radius:2px;background:#fff"></div>
<div class="a t12" style="left:1510px;top:435px;letter-spacing:-0.1px;color:#323130">ここにデータ フィールドを<span style="letter-spacing:-0.9px">...</span></div>
<div class="a t12 b" style="left:1506px;top:468px;color:#323130">ドリルスルー</div>
<div class="a t12" style="left:1508px;top:493px;color:#323130">クロス レポート</div>
<div class="a" style="left:1621px;top:493px;width:32px;height:16px;border:1px solid #605e5c;border-radius:8px;background:#fff"></div>
<div class="a" style="left:1625px;top:496px;width:10px;height:10px;border-radius:50%;background:#605e5c"></div>
<div class="a t12" style="left:1508px;top:520px;color:#323130">すべてのフィルター</div>
<div class="a t12" style="left:1508px;top:537px;color:#323130">を保持する</div>
<div class="a" style="left:1621px;top:519px;width:32px;height:16px;border-radius:8px;background:#117865"></div>
<svg style="left:1626px;top:522px" width="12" height="10" viewBox="0 0 12 10"><path d="M1.5 5.5L4 8L10 2" fill="none" stroke="#fff" stroke-width="1.3"/></svg>
<div class="a" style="left:1640px;top:522px;width:10px;height:10px;border-radius:50%;background:#fff"></div>
<div class="a" style="left:1499px;top:563px;width:170px;height:27px;border:1px dashed #bfbfbf;border-radius:2px;background:#fff"></div>
<div class="a t12" style="left:1507px;top:570px;color:#323130">ドリルスルー フィールド<span style="letter-spacing:-0.9px">...</span></div>

<!-- ===== data pane ===== -->
<div class="a" style="left:1675px;top:85px;width:180px;height:866px;background:#f4f4f4;border-left:1px solid #dcdcdc"></div>
<div class="a b" style="left:1684px;top:96px;font-size:16px;line-height:20px;color:#252423">データ</div>
<svg style="left:1837px;top:101px" width="10" height="9" viewBox="0 0 10 9"><path d="M1.2 0.8L4.6 4.5L1.2 8.2M4.7 0.8L8.1 4.5L4.7 8.2" fill="none" stroke="#323130" stroke-width="1.6"/></svg>
<div class="a" style="left:1681px;top:133px;width:170px;height:24px;background:#fff;border:1px solid #d1d1d1;border-bottom-color:#616161;border-radius:4px"></div>
<svg style="left:1692px;top:137px" width="16" height="16" viewBox="0 0 16 16"><circle cx="6.5" cy="6.5" r="5" fill="none" stroke="#424242" stroke-width="1.1"/><path d="M10.2 10.2L14 14" stroke="#424242" stroke-width="1.1"/></svg>
<div class="a t13" style="left:1714px;top:137px;color:#707070">検索</div>
<svg style="left:1691px;top:173px" width="8" height="10" viewBox="0 0 8 10"><path d="M2 1L6 5L2 9" fill="none" stroke="#323130" stroke-width="1"/></svg>
<svg style="left:1704px;top:171px" width="14" height="14" viewBox="0 0 14 14"><rect x="1.7" y="1.7" width="11" height="11" rx="2.3" fill="none" stroke="#323130" stroke-width="1.3"/><path d="M4.6 1.7V12.7M9.8 1.7V12.7M1.7 4.6H12.7M1.7 9.8H12.7" stroke="#323130" stroke-width="1.1"/></svg>
<div class="a t12" style="left:1723px;top:170px;letter-spacing:-0.3px;color:#323130">テーブル1</div>

<!-- ===== bottom bar ===== -->
<div class="a" style="left:4px;top:915px;width:1490px;height:36px;background:#f3f3f3"></div>
<div class="a" style="left:1293px;top:85px;width:1px;height:830px;background:#bebebe"></div>
<svg style="left:14px;top:922px" width="24" height="25" viewBox="0 0 24 25"><rect x="4" y="0.8" width="16" height="12.5" rx="2.5" fill="#117865"/><path d="M2 15.5H22" stroke="#117865" stroke-width="1.2"/><rect x="0" y="21.5" width="24" height="2.6" rx="1.3" fill="#117865"/></svg>
<svg style="left:63px;top:920px" width="14" height="22" viewBox="0 0 14 22"><rect x="1.7" y="1.8" width="10.7" height="19" rx="2.3" fill="none" stroke="#484644" stroke-width="1.3"/><path d="M5.5 17.2H8.5" stroke="#484644" stroke-width="1.2"/></svg>
<svg style="left:97px;top:928px" width="6" height="10" viewBox="0 0 6 10"><path d="M5 1L1 5L5 9Z" fill="none" stroke="#c8c6c4" stroke-width="1"/></svg>
<svg style="left:119px;top:928px" width="6" height="10" viewBox="0 0 6 10"><path d="M1 1L5 5L1 9Z" fill="none" stroke="#c8c6c4" stroke-width="1"/></svg>
<div class="a" style="left:131px;top:915px;width:1px;height:36px;background:#8a8886"></div>
<div class="a" style="left:132px;top:915px;width:85px;height:36px;background:#fff"></div>
<div class="a" style="left:132px;top:946px;width:85px;height:4px;background:#117865"></div>
<div class="a t12" style="left:152px;top:925px;color:#252423">ページ 1</div>
<div class="a" style="left:217px;top:915px;width:39px;height:36px;background:#117865"></div>
<svg style="left:231px;top:926px" width="11" height="11" viewBox="0 0 11 11"><path d="M5.5 0V11M0 5.5H11" stroke="#fff" stroke-width="2.7"/></svg>
<div class="a" style="left:0;top:950px;width:1855px;height:1px;background:#1f1f1f"></div>
</body></html>
